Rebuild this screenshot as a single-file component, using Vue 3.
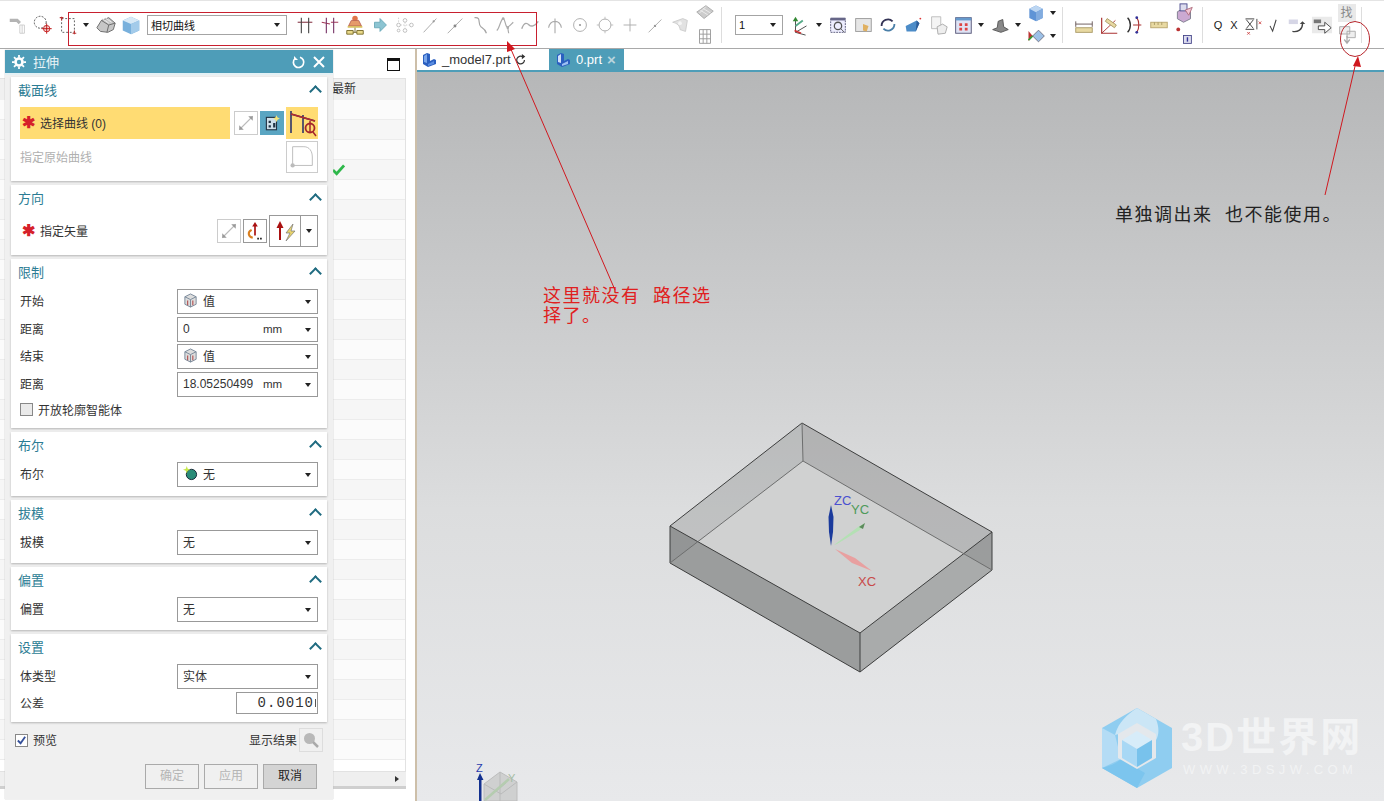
<template>
  <div class="page">
    <!-- top toolbar -->
    <header class="toolbar">
      <span class="tool"><svg viewBox="0 0 24 24"><path d="M3 7h8l3 3" fill="none" stroke="#b4b4b4" stroke-width="3.500"/><path d="M14 12h5v9h-5zM16.500 12v9" fill="none" stroke="#ccc"/></svg></span>
      <span class="tool"><svg viewBox="0 0 24 24"><circle cx="9" cy="9" r="6.500" fill="none" stroke="#444" stroke-dasharray="2 1.500"/><circle cx="16" cy="16" r="3.500" fill="#f3d6d6" stroke="#c22"/><path d="M16 10.500v11M10.500 16h11" stroke="#b11"/></svg></span>
      <span class="tool"><svg viewBox="0 0 24 24"><rect x="5" y="5" width="14" height="15" fill="none" stroke="#555" stroke-dasharray="2 2"/><path d="M3 4h4M5 3v4M17 21h4M19 18v4" stroke="#b33" stroke-width="1.200"/></svg></span>
      <span class="caret-slot"><i class="caret"></i></span>
      <span class="tool tool-a"><svg viewBox="0 0 24 24"><path d="M2 15l5-8 8-3 7 6-2 7-6 3-8-1z" fill="#c6c6c6" stroke="#666"/><path d="M7 7l8 5 7-2M15 12l-2 8" fill="none" stroke="#666"/><path d="M8 5l7 5M11 4l7 5" stroke="#eee"/></svg></span>
      <span class="tool"><svg viewBox="0 0 24 24"><path d="M3 7l9-4 9 4v11l-9 4-9-4z" fill="#78b0dc"/><path d="M3 7l9 4 9-4-9-4z" fill="#d7e9f6"/><path d="M12 11v11l9-4V7z" fill="#a3cbea"/></svg></span>
      <span class="tb-select wide">相切曲线<i class="caret"></i></span>

      <span class="tool tool-b"><svg viewBox="0 0 24 24"><path d="M4 9h16" stroke="#8a3a4a" stroke-width="1.200"/><path d="M8 4v17M16 4v17" stroke="#444" stroke-width="1.200"/></svg></span>
      <span class="tool"><svg viewBox="0 0 24 24"><path d="M3 9l9 2M13 9h8" stroke="#a33a5a" stroke-width="1.200"/><path d="M8 4v17M16 4v17" stroke="#736" stroke-width="1.200"/></svg></span>
      <span class="tool"><svg viewBox="0 0 24 24"><circle cx="12" cy="5" r="3" fill="#e0754a"/><path d="M8 7h8l3 6H5z" fill="#e59a6a" stroke="#b65"/><path d="M4 13h16v2H4z" fill="#d8c060"/><path d="M3 18h7v4H3zM14 18h7v4h-7z" fill="#e9d98a" stroke="#786a2a"/><path d="M10 20h4M12 15v5" stroke="#786a2a"/></svg></span>
      <span class="tool"><svg viewBox="0 0 24 24"><path d="M6 9h6V5l7 7-7 7v-4H6z" fill="#8cc4d2" stroke="#6aa8b8"/></svg></span>
      <span class="tool"><svg viewBox="0 0 24 24"><g fill="none" stroke="#bbb"><circle cx="12" cy="7" r="2"/><circle cx="5" cy="12" r="2"/><circle cx="19" cy="12" r="2"/><circle cx="12" cy="18" r="2"/><circle cx="5" cy="18" r="1.500"/></g><path d="M7 12h10M12 9v7M5 4v6" stroke="#ccc" stroke-dasharray="1.500 1.500"/></svg></span>
      <span class="tool"><svg viewBox="0 0 24 24"><path d="M5 20L19 5" stroke="#a5a5a5"/><circle cx="16" cy="8" r="1.200" fill="#999"/></svg></span>
      <span class="tool"><svg viewBox="0 0 24 24"><path d="M4 21L20 5" stroke="#a5a5a5"/><circle cx="12" cy="13" r="1.600" fill="#888"/></svg></span>
      <span class="tool"><svg viewBox="0 0 24 24"><path d="M6 4c8-1 3 7 7 10 3 2 5 3 6 7" stroke="#a5a5a5" fill="none" stroke-width="1.300"/></svg></span>
      <span class="tool"><svg viewBox="0 0 24 24"><path d="M3 18C6 16 7 6 10 5c2 0 2 7 4 9 2 1 5-3 7-5M15 15l1 6" stroke="#aaa" fill="none" stroke-width="1.300"/><circle cx="10" cy="5" r="1.400" fill="#aaa"/><circle cx="15" cy="15" r="1.400" fill="#aaa"/></svg></span>
      <span class="tool"><svg viewBox="0 0 24 24"><path d="M3 16c3-8 6-6 8-4s6 2 10-4" stroke="#aaa" fill="none" stroke-width="1.600"/></svg></span>
      <span class="tool"><svg viewBox="0 0 24 24"><path d="M5 15c1-5 4-7 7-7s6 2 7 7M12 5v16" stroke="#aaa" fill="none" stroke-width="1.200"/></svg></span>
      <span class="tool"><svg viewBox="0 0 24 24"><circle cx="12" cy="12" r="7" stroke="#aaa" fill="none"/><circle cx="12" cy="12" r="1.200" fill="#999"/></svg></span>
      <span class="tool"><svg viewBox="0 0 24 24"><circle cx="12" cy="12" r="6.500" stroke="#aaa" fill="none"/><path d="M12 3v3M12 18v3M3 12h3M18 12h3" stroke="#bbb"/></svg></span>
      <span class="tool"><svg viewBox="0 0 24 24"><path d="M12 5v14M5 12h14" stroke="#aaa"/></svg></span>
      <span class="tool"><svg viewBox="0 0 24 24"><path d="M5 20L19 6" stroke="#aaa"/><circle cx="12" cy="13" r="1.300" fill="#999"/></svg></span>
      <span class="tool"><svg viewBox="0 0 24 24"><path d="M4 9l11-4 5 2-2 12-6-2c0-4-3-7-8-8z" fill="#e2e2e2" stroke="#ccc"/><circle cx="12" cy="10" r="2" fill="#f6f6f6"/></svg></span>
      <span class="tool tool-col">
        <svg viewBox="0 0 24 24"><path d="M3 11l10-7 8 6-10 8z" fill="#ccc" stroke="#aaa"/><path d="M7 9l8 5M10 7l8 5M13 5l-7 7" stroke="#eee"/></svg>
        <svg viewBox="0 0 24 24"><path d="M6 5h12v15H6zM6 10h12M6 15h12M10 5v15M14 5v15" fill="none" stroke="#999"/></svg>
      </span>
      <span class="sep"></span>

      <span class="tb-select narrow">1<i class="caret"></i></span>
      <span class="tool tool-c"><svg viewBox="0 0 24 24"><path d="M6 20V6M6 20l12-7M6 20l11 3" fill="none" stroke="#444"/><path d="M6 3l-3 5h6z" fill="#383"/><path d="M6 13l8-6" stroke="#5a8" stroke-width="2"/><path d="M5 18l7 3" stroke="#c33" stroke-width="2"/></svg></span>
      <span class="caret-slot"><i class="caret"></i></span>
      <span class="tool"><svg viewBox="0 0 24 24"><rect x="4" y="5" width="16" height="15" fill="#eef" stroke="#557" stroke-dasharray="2 1"/><path d="M4 4h16v3H4z" fill="#668"/><circle cx="12" cy="13" r="4" fill="none" stroke="#555" stroke-width="1.400"/><path d="M15 16l4 4" stroke="#555"/></svg></span>
      <span class="tool"><svg viewBox="0 0 24 24"><rect x="4" y="5" width="17" height="14" fill="#e6e6e6" stroke="#999"/><path d="M12 11l6 2-2 6-4-1z" fill="#e0b060"/></svg></span>
      <span class="tool"><svg viewBox="0 0 24 24"><path d="M5 13a7 7 0 0 1 12-5" fill="none" stroke="#335" stroke-width="2"/><path d="M19 11a7 7 0 0 1-12 5" fill="none" stroke="#4a7fa8" stroke-width="2"/></svg></span>
      <span class="tool"><svg viewBox="0 0 24 24"><path d="M4 13l12-6 3 3-4 9H5z" fill="#4c8cc8"/><path d="M16 7l3 3-4 9z" fill="#2c5c98"/><circle cx="20" cy="5" r="1" fill="#d33"/></svg></span>
      <span class="tool"><svg viewBox="0 0 24 24"><path d="M5 3h10v13H5z" fill="#f4f4f4" stroke="#bbb"/><path d="M11 14l6-3 5 3-2 7-8 1z" fill="#eee" stroke="#aaa"/></svg></span>
      <span class="tool"><svg viewBox="0 0 24 24"><rect x="4" y="4" width="17" height="17" fill="#dfe3f4" stroke="#557"/><path d="M4 4h17v3H4z" fill="#69c"/><path d="M8 10h3v3H8zM14 10h3v3h-3zM8 15h3v3H8zM14 15h3v3h-3z" fill="#d44"/></svg></span>
      <span class="caret-slot"><i class="caret"></i></span>
      <span class="tool tool-d"><svg viewBox="0 0 24 24"><path d="M4 17l5-2 1-7 5-2 1 8 5 3-8 3z" fill="#888" stroke="#555"/></svg></span>
      <span class="caret-slot"><i class="caret"></i></span>
      <span class="stack">
        <span class="stack-row"><svg viewBox="0 0 24 24"><path d="M4 7l8-4 8 4v11l-8 4-8-4z" fill="#5f94d6"/><path d="M4 7l8 4 8-4-8-4z" fill="#bcd6f2"/><path d="M12 11v11l8-4V7z" fill="#82acdf"/></svg><i class="caret"></i></span>
        <span class="stack-row"><svg viewBox="0 0 24 24"><path d="M3 6l5 6-5 6z" fill="#b33"/><path d="M8 12l7-7 7 7-7 7z" fill="#9cc0e6" stroke="#667"/><path d="M3 17l5-5" stroke="#393" stroke-width="2"/></svg><i class="caret"></i></span>
      </span>
      <span class="sep sep-b"></span>

      <span class="tool"><svg viewBox="0 0 24 24"><path d="M3 8v6M21 8v6M3 11h18" stroke="#655" fill="none"/><rect x="3" y="15" width="18" height="5" fill="#e8d9a2" stroke="#a96"/></svg></span>
      <span class="tool"><svg viewBox="0 0 24 24"><path d="M4 4v17h17" fill="none" stroke="#a33" stroke-width="1.300"/><path d="M4 21L19 7" stroke="#a33"/><path d="M10 5l10 7-2 3-10-7z" fill="#e8d9a2" stroke="#a96"/></svg></span>
      <span class="tool"><svg viewBox="0 0 24 24"><path d="M5 4c4 4 4 12 0 16" fill="none" stroke="#333" stroke-width="1.500"/><path d="M15 4c3 4 3 12 0 16M11 12h9" fill="none" stroke="#a33" stroke-width="1.200"/><circle cx="15" cy="4" r="1.500" fill="#339"/><circle cx="15" cy="20" r="1.500" fill="#339"/></svg></span>
      <span class="tool"><svg viewBox="0 0 24 24"><rect x="3" y="9" width="18" height="6" fill="#e8d9a2" stroke="#b9a56c"/><path d="M7 9v3M11 9v3M15 9v3" stroke="#a96"/></svg></span>
      <span class="tool tool-col info">
        <svg viewBox="0 0 24 24"><path d="M5 10l7-4 8 4v8l-8 4-7-4z" fill="#cba9d2" stroke="#778"/><rect x="8" y="1" width="8" height="8" fill="#dde" stroke="#448"/><path d="M14 8l8-3-4 9z" fill="#f1c6d6" stroke="#a67"/></svg>
        <svg viewBox="0 0 24 24"><circle cx="6" cy="5" r="2.200" fill="#b33"/><rect x="12" y="12" width="9" height="9" fill="#dde" stroke="#448"/><path d="M16.500 14v5" stroke="#339" stroke-width="1.600"/></svg>
      </span>
      <span class="sep sep-c"></span>

      <span class="letter">Q</span>
      <span class="letter">X</span>
      <span class="tool small-tool"><svg viewBox="0 0 24 24"><path d="M4 5h10M4 17h10M5 6l8 10M13 6l-8 10" stroke="#333" fill="none"/><path d="M17 5v12" stroke="#333"/><path d="M19 8l3 3M22 8l-3 3M6 20l3 3M9 20l-3 3" stroke="#c44"/></svg></span>
      <span class="tool small-tool"><svg viewBox="0 0 24 24"><path d="M8 13l3 6 4-13" fill="none" stroke="#444" stroke-width="1.200"/></svg></span>
      <span class="tool"><svg viewBox="0 0 24 24"><path d="M3 6h10v5H3z" fill="#d6d6e6"/><path d="M7 19c6 1 11-2 11-8" fill="none" stroke="#444" stroke-width="1.500"/><path d="M15 11l3-3 3 3z" fill="#444"/></svg></span>
      <span class="tool"><svg viewBox="0 0 24 24"><rect x="1" y="3" width="22" height="18" fill="#eaeaea"/><path d="M3 6h8v4H3z" fill="#777"/><path d="M8 13h7V9l7 6-7 6v-4H8z" fill="#fff" stroke="#444"/></svg></span>
      <span class="tool tool-col last">
        <span class="find">找</span>
        <svg viewBox="0 0 24 24"><path d="M4 4h11v8H4zM12 9h9v7h-9z" fill="#eee" stroke="#aaa"/><path d="M12 14v7M9 18l3 4 3-4" fill="none" stroke="#aaa" stroke-width="1.400"/></svg>
      </span>
      <span class="sep sep-d"></span>
    </header>

    <div class="workspace">
      <!-- resource list behind the dialog -->
      <aside class="side">
        <div class="side-top"><span class="max-btn"></span></div>
        <div class="table">
          <div class="table-head"><span>最新</span></div>
          <div v-for="n in 33" :key="n" class="table-row">
            <svg v-if="n === 4" class="tick" viewBox="0 0 14 12"><path d="M1 6l4 4 8-9" fill="none" stroke="#2eb84a" stroke-width="3"/></svg>
          </div>
        </div>
        <div class="hscroll"><i></i></div>
      </aside>

      <main class="main">
        <nav class="tabs">
          <div class="tab">
            <svg class="part" viewBox="0 0 16 16"><path d="M2 3l4-2 3 1v7l4-2 2 1v4l-8 3-5-3z" fill="#2a5fc0"/><path d="M3 4l3-2v9l-3-1z" fill="#79a6ea"/><path d="M7 12l6-3v3l-6 2z" fill="#5a8de0"/></svg>
            <span>_model7.prt</span>
            <svg class="reload" viewBox="0 0 14 14"><path d="M11 7a4.500 4.500 0 1 1-2-3.700" fill="none" stroke="#333" stroke-width="1.400"/><path d="M8 0v6l4-3z" fill="#333"/></svg>
          </div>
          <div class="tab active">
            <svg class="part" viewBox="0 0 16 16"><path d="M2 3l4-2 3 1v7l4-2 2 1v4l-8 3-5-3z" fill="#2a5fc0"/><path d="M3 4l3-2v9l-3-1z" fill="#cfe0fa"/><path d="M7 12l6-3v3l-6 2z" fill="#9cc0f2"/></svg>
            <span>0.prt</span>
            <b>×</b>
          </div>
        </nav>
        <div class="viewport">
          <svg class="model" viewBox="417 72 967 729">
            <polygon points="803,461 670,563 860,672 992,570" fill="#d0d1d1"/>
            <polygon points="802,423 670,526 670,563 803,461" fill="#8a8b8b" fill-opacity=".35"/>
            <polygon points="802,423 992,532 992,570 803,461" fill="#7d7e7e" fill-opacity=".4"/>
            <polygon points="670,526 860,633 860,672 670,563" fill="#636464" fill-opacity=".48"/>
            <polygon points="860,633 992,532 992,570 860,672" fill="#7b7c7c" fill-opacity=".45"/>
            <g fill="none" stroke="#3d3e3e" stroke-width="1">
              <path d="M802 423L670 526V563L860 672L992 570V532ZM670 526L860 633L992 532M860 633V672"/>
            </g>
            <path d="M802 423L803 461L670 563M803 461L992 570" fill="none" stroke="#6d6e6e"/>
            <path d="M831 505l2.500 12-.5 15-2 14-2-14-.5-15z" fill="#1a3a9c"/>
            <path d="M834 545l24-18 7-4-5 7-23 14z" fill="#b4e0b4"/>
            <path d="M859 527l6-4-2 6z" fill="#5b8b5b"/>
            <path d="M835 549l20 9 17 13-20-8z" fill="#e8a0a0"/>
            <text x="834" y="505" class="t-z">ZC</text>
            <text x="851" y="514" class="t-y">YC</text>
            <text x="858" y="586" class="t-x">XC</text>
            <g fill="#cfd0d0" stroke="#bcbdbd">
              <path d="M484 784l16-12 17 10v19h-33z"/>
            </g>
            <path d="M484 801l22-18M500 772v29M484 784l17 10 16-12" fill="none" stroke="#b9baba"/>
            <path d="M485 800l24-21" stroke="#b5ccb0" stroke-width="2.500"/>
            <path d="M480 773l-3 7h2v21h2.500v-21h2z" fill="#12308f"/>
            <text x="476" y="772" class="t-small-z">Z</text>
            <text x="508" y="782" class="t-small-y">Y</text>
          </svg>
          <div class="watermark">
            <svg viewBox="0 0 72 82" class="wm-logo">
              <polygon points="36,1 71,21 71,61 36,81 1,61 1,21" fill="#8fcdf0"/>
              <path d="M36 1L55 12C62 30 52 38 48 40L36 22 14 28C18 14 26 8 36 1Z" fill="#cbe6f6"/>
              <path d="M1 21L14 28 20 52 1 61Z" fill="#b4dcf5"/>
              <path d="M20 52L44 66 36 81 1 61C4 60 14 58 20 52Z" fill="#7cc5ee"/>
              <path d="M36 16L55 27V51L36 62 17 51V27Z" fill="#e4e8ec"/>
              <path d="M36 24L51 33 36 42 21 33Z" fill="#d7ecf9"/>
              <path d="M21 33L36 42V60L21 51Z" fill="#a8d8f5"/>
              <path d="M51 33L36 42V60L51 51Z" fill="#78c2ec"/>
            </svg>
            <div class="wm-text">
              <div class="wm-big">3D世界网</div>
              <div class="wm-small">WWW.3DSJW.COM</div>
            </div>
          </div>
        </div>
      </main>
    </div>

    <!-- floating extrude dialog -->
    <section class="dialog">
      <div class="dlg-title">
        <svg class="gear" viewBox="0 0 16 16"><circle cx="8" cy="8" r="4" fill="none" stroke="#fff" stroke-width="3"/><path d="M8 0v3M8 13v3M0 8h3M13 8h3M2.300 2.300l2 2M11.700 11.700l2 2M13.700 2.300l-2 2M4.300 11.700l-2 2" stroke="#fff" stroke-width="2"/></svg>
        <span class="dlg-name">拉伸</span>
        <svg class="t-btn" viewBox="0 0 14 14"><path d="M3 3.500a5.200 5.200 0 1 0 5-1.200" fill="none" stroke="#fff" stroke-width="1.700"/><path d="M2 1v4h4z" fill="#fff"/></svg>
        <svg class="t-btn" viewBox="0 0 14 14"><path d="M2 2l10 10M12 2L2 12" stroke="#fff" stroke-width="2"/></svg>
      </div>

      <div class="sec s-curve">
        <div class="sec-head">截面线<i class="chev"></i></div>
        <div class="curve-row">
          <div class="pick"><b class="star">✱</b><span class="up">选择曲线 (0)</span></div>
          <span class="sq off"><svg viewBox="0 0 16 16"><path d="M2 14L14 2" stroke="#bbb"/><path d="M10 2h4v4zM2 10v4h4z" fill="#999"/></svg></span>
          <span class="sq blue"><svg viewBox="0 0 16 16"><rect x="3" y="3" width="9" height="11" fill="#cfe0ea" stroke="#234"/><path d="M5 6h2v2H5zM5 10h2v2H5zM9 8h2v4H9z" fill="#234"/><path d="M12 1l1 2 2 1-2 1-1 2-1-2-2-1 2-1z" fill="#f4e57c"/></svg></span>
          <span class="big-sq yellow"><svg viewBox="0 0 32 32"><path d="M5 4v22M5 7l24 7M17 8v18" fill="none" stroke="#222a6a" stroke-width="1.500"/><path d="M5 7l24 7" stroke="#b62d2d" stroke-width="1.500"/><circle cx="24" cy="21" r="4.500" fill="none" stroke="#a4262c" stroke-width="1.800"/><path d="M24 14v12M27 25l3 4" stroke="#a4262c" stroke-width="1.500"/></svg></span>
        </div>
        <div class="origin-row">
          <span class="muted up">指定原始曲线</span>
          <span class="big-sq plain"><svg viewBox="0 0 32 32"><path d="M6 25V5h12c6 0 9 5 9 11v9z" fill="none" stroke="#bbb"/><circle cx="6" cy="25" r="2.300" fill="#bbb"/></svg></span>
        </div>
      </div>

      <div class="sec s-dir">
        <div class="sec-head">方向<i class="chev"></i></div>
        <div class="vec-row">
          <span class="label"><b class="star">✱</b><span class="up">指定矢量</span></span>
          <span class="sq off"><svg viewBox="0 0 16 16"><path d="M2 14L14 2" stroke="#bbb"/><path d="M10 2h4v4zM2 10v4h4z" fill="#999"/></svg></span>
          <span class="sq gap"><svg viewBox="0 0 16 16"><path d="M8 2v10" stroke="#a11" stroke-width="1.500"/><path d="M8 0L5.500 4h5z" fill="#a11"/><path d="M5 7c-4 2-3 6 1 7" fill="none" stroke="#d97f1f" stroke-width="1.800"/><path d="M10 14h1.500v1.500H10zM12.500 14H14v1.500h-1.500z" fill="#222"/></svg></span>
          <span class="split">
            <span class="split-main"><svg viewBox="0 0 28 24"><path d="M9 8v13" stroke="#a11" stroke-width="2"/><path d="M9 2L5.500 9h7z" fill="#a11"/><path d="M22 5l-7 9h4l-4 8 9-10h-4z" fill="#e9d46c" stroke="#777" stroke-width=".7"/></svg></span>
            <span class="split-arrow"><i class="caret"></i></span>
          </span>
        </div>
      </div>

      <div class="sec s-limit">
        <div class="sec-head">限制<i class="chev"></i></div>
        <div class="rows">
          <div class="row tall"><span class="up">开始</span><span class="combo"><svg class="cube" viewBox="0 0 16 16"><path d="M2 4l6-3 6 3v8l-6 3-6-3z" fill="#ddd" stroke="#789"/><path d="M2 4l6 3 6-3M8 7v8" fill="none" stroke="#789"/><path d="M5 8v5M10.500 8v5" stroke="#a33"/></svg>值<i class="caret"></i></span></div>
          <div class="row tall"><span class="up">距离</span><span class="combo"><em>0</em><small>mm</small><i class="caret"></i></span></div>
          <div class="row tall pull"><span class="up">结束</span><span class="combo"><svg class="cube" viewBox="0 0 16 16"><path d="M2 4l6-3 6 3v8l-6 3-6-3z" fill="#ddd" stroke="#789"/><path d="M2 4l6 3 6-3M8 7v8" fill="none" stroke="#789"/><path d="M5 8v5M10.500 8v5" stroke="#a33"/></svg>值<i class="caret"></i></span></div>
          <div class="row tall"><span class="up">距离</span><span class="combo"><em>18.05250499</em><small>mm</small><i class="caret"></i></span></div>
        </div>
        <label class="check-row"><i class="box"></i>开放轮廓智能体</label>
      </div>

      <div class="sec s-one">
        <div class="sec-head">布尔<i class="chev"></i></div>
        <div class="row tall"><span class="up">布尔</span><span class="combo"><svg class="cube" viewBox="0 0 16 16"><circle cx="9" cy="9" r="5.500" fill="#2a8c78" stroke="#123"/><path d="M4 0l1 3 3 1-3 1-1 3-1-3-3-1 3-1z" fill="#c6e84a"/></svg>无<i class="caret"></i></span></div>
      </div>

      <div class="sec s-one">
        <div class="sec-head">拔模<i class="chev"></i></div>
        <div class="row tall"><span class="up">拔模</span><span class="combo">无<i class="caret"></i></span></div>
      </div>

      <div class="sec s-one">
        <div class="sec-head">偏置<i class="chev"></i></div>
        <div class="row tall"><span class="up">偏置</span><span class="combo">无<i class="caret"></i></span></div>
      </div>

      <div class="sec s-set">
        <div class="sec-head">设置<i class="chev"></i></div>
        <div class="row tall"><span class="up">体类型</span><span class="combo">实体<i class="caret"></i></span></div>
        <div class="row tol-row"><span class="up">公差</span><span class="tol">0.0010<i></i></span></div>
      </div>

      <div class="dlg-foot">
        <label class="preview"><i class="box on"><svg viewBox="0 0 12 12"><path d="M2 6l3 3 5-7" fill="none" stroke="#35509a" stroke-width="2"/></svg></i><span class="up">预览</span></label>
        <span class="result up">显示结果</span>
        <span class="search"><svg viewBox="0 0 18 18"><circle cx="7.500" cy="7.500" r="5.500" fill="#b8b8b8"/><path d="M11 11l5 5" stroke="#aaa" stroke-width="2.500"/></svg></span>
      </div>
      <div class="dlg-btns">
        <span class="btn off">确定</span>
        <span class="btn off">应用</span>
        <span class="btn main-btn">取消</span>
      </div>
    </section>

    <!-- red annotations drawn on top of the screenshot -->
    <svg class="notes" viewBox="0 0 1384 801">
      <rect x="68.500" y="12.500" width="468" height="33" fill="none" stroke="#c8202f"/>
      <path d="M615 290L510 47" stroke="#d0181f"/>
      <path d="M507 41l8 8-8 3z" fill="#d0181f"/>
      <path d="M1325 195L1356 62" stroke="#d0181f"/>
      <path d="M1358 56l3 11-8-1z" fill="#d0181f"/>
      <ellipse cx="1355" cy="39" rx="14.500" ry="17.500" fill="none" stroke="#b8262c"/>
    </svg>
    <p class="note-red">这里就没有  路径选<br>择了。</p>
    <p class="note-black">单独调出来  也不能使用。</p>
  </div>
</template>

<script setup>
</script>

<style>
html, body {
  margin: 0;
  background: #fff;
}
</style>

<style scoped>
.page {
  position: relative;
  width: 1384px;
  height: 801px;
  overflow: hidden;
  background: #fff;
  display: flex;
  flex-direction: column;
  font-family: "Liberation Sans", "Noto Sans CJK SC", sans-serif;
  font-size: 12px;
  color: #333;
}
.up {
  padding-bottom: 2px;
}

/* toolbar */
.toolbar {
  flex: none;
  box-sizing: border-box;
  border-top: 1px solid #e4e4e4;
  border-bottom: 1px solid #a9a9a9;
  height: 49px;
  padding-left: 5px;
  display: flex;
  align-items: center;
}
.tool {
  flex: none;
  width: 25px;
  display: flex;
  justify-content: center;
  align-items: center;
}
.tool svg {
  width: 22px;
  height: 22px;
}
.tool-a { margin-left: 1px; }
.tool-b { margin-left: 5px; }
.tool-c { margin-left: 5px; }
.tool-col {
  flex-direction: column;
  gap: 1px;
}
.info svg { width: 21px; height: 21px; }
.small-tool { width: 21px; }
.last svg { height: 22px; }
.caret-slot {
  flex: none;
  width: 12px;
  display: flex;
  justify-content: center;
}
.caret {
  display: inline-block;
  width: 0;
  height: 0;
  border: 3.500px solid transparent;
  border-top: 4px solid #222;
  border-bottom: 0;
}
.tb-select {
  flex: none;
  box-sizing: border-box;
  height: 20px;
  border: 1px solid #a4a4a4;
  padding: 0 6px 0 3px;
  display: flex;
  align-items: center;
  justify-content: space-between;
  font-size: 11px;
  color: #111;
}
.wide {
  width: 140px;
  margin-left: 4px;
}
.narrow {
  width: 48px;
  margin-left: 13px;
}
.sep {
  flex: none;
  width: 1px;
  height: 36px;
  background: #ddd;
  margin-left: 4px;
}
.sep-b { margin-left: 6px; margin-right: 8px; }
.sep-c { margin-left: 6px; margin-right: 7px; }
.sep-d { margin-left: 2px; }
.stack {
  flex: none;
  margin-left: 2px;
  display: flex;
  flex-direction: column;
  gap: 3px;
}
.stack-row {
  display: flex;
  align-items: center;
  gap: 4px;
}
.stack-row svg {
  width: 20px;
  height: 20px;
}
.letter {
  flex: none;
  width: 16px;
  text-align: center;
  font-size: 11px;
  color: #222;
}
.find {
  width: 18px;
  height: 18px;
  background: #e9e9e9;
  color: #888;
  font-size: 12px;
  line-height: 18px;
  text-align: center;
}

/* workspace */
.workspace {
  flex: 1;
  min-height: 0;
  display: flex;
}
.side {
  flex: none;
  box-sizing: border-box;
  padding-right: 9px;
  display: flex;
  flex-direction: column;
  border-right: 2px solid #cdbfa9;
  width: 417px;
}
.side-top {
  flex: none;
  height: 29px;
  display: flex;
  justify-content: flex-end;
  align-items: center;
  padding-right: 6px;
  padding-top: 2px;
  box-sizing: border-box;
}
.max-btn {
  width: 11px;
  height: 9px;
  border: 1px solid #111;
  border-top-width: 3px;
}
.table {
  flex: 1;
  min-height: 0;
  overflow: hidden;
  border: 1px solid #e2e2e2;
  border-left: 0;
}
.table-head {
  height: 21px;
  background: #f0f0f0;
  padding-left: 332px;
  line-height: 21px;
  font-size: 12px;
  color: #333;
}
.table-row {
  height: 19px;
  border-bottom: 1px solid #ececec;
  position: relative;
}
.table-row:nth-child(even) { background: #fbfbfb; }
.table-row:nth-child(odd) { background: #f6f6f6; }
.tick {
  position: absolute;
  left: 332px;
  top: 4px;
  width: 13px;
  height: 12px;
}
.hscroll {
  flex: none;
  height: 14px;
  margin-bottom: 12px;
  background: #efefef;
  border-bottom: 3px solid #cfcfcf;
  position: relative;
}
.hscroll i {
  position: absolute;
  right: 7px;
  top: 4px;
  border: 3px solid transparent;
  border-left: 4px solid #333;
  border-right: 0;
}
.main {
  flex: 1;
  min-width: 0;
  display: flex;
  flex-direction: column;
}
.tabs {
  flex: none;
  height: 21px;
  border-bottom: 2px solid #4e9db8;
  display: flex;
}
.tab {
  flex: none;
  box-sizing: border-box;
  width: 132px;
  padding-left: 4px;
  display: flex;
  align-items: center;
  font-size: 13px;
  color: #333;
}
.tab .part {
  width: 16px;
  height: 16px;
  margin-right: 5px;
}
.reload {
  width: 12px;
  height: 12px;
  margin-left: 4px;
}
.tab.active {
  width: 75px;
  background: #4e9db8;
  color: #fff;
  padding-left: 6px;
}
.tab.active b {
  margin-left: 5px;
  color: #b9d5de;
  font-size: 15px;
  line-height: 1;
}
.viewport {
  flex: 1;
  min-height: 0;
  position: relative;
  background: linear-gradient(#b6b7b8, #dcddde 60%, #e8e9eb);
}
.model {
  position: absolute;
  left: 0;
  top: 0;
  width: 967px;
  height: 729px;
}
.model text {
  font-family: "Liberation Sans", sans-serif;
  font-size: 13px;
}
.model .t-z { fill: #4a50d0; }
.model .t-y { fill: #4e9a5a; }
.model .t-x { fill: #c84a4a; }
.model .t-small-z { fill: #2a3cae; font-size: 11px; }
.model .t-small-y { fill: #a5bda5; font-size: 11px; }
.watermark {
  position: absolute;
  left: 684px;
  top: 635px;
  display: flex;
  gap: 8px;
}
.wm-logo {
  width: 72px;
  height: 82px;
}
.wm-text {
  padding-top: 8px;
  color: #f2f3f4;
}
.wm-big {
  font-size: 40px;
  font-weight: 700;
  line-height: 44px;
  letter-spacing: 2px;
  white-space: nowrap;
}
.wm-small {
  margin-top: 4px;
  font-size: 13px;
  line-height: 14px;
  letter-spacing: 4.400px;
  padding-left: 2px;
  white-space: nowrap;
}

/* dialog */
.dialog {
  position: absolute;
  left: 5px;
  top: 50px;
  width: 328px;
  height: 749px;
  box-sizing: border-box;
  background: #f0f0f0;
  box-shadow: 0 0 1px #aaa;
  padding-bottom: 8px;
  display: flex;
  flex-direction: column;
}
.dlg-title {
  flex: none;
  height: 23px;
  background: #4e9db8;
  color: #fff;
  display: flex;
  align-items: center;
  padding: 0 7px;
  margin-bottom: 4px;
  box-shadow: 0 2px 0 #e4f1f5;
}
.gear {
  width: 14px;
  height: 14px;
  margin-right: 7px;
}
.dlg-name {
  flex: 1;
  font-size: 13px;
  color: #eaf4f7;
}
.t-btn {
  width: 14px;
  height: 14px;
  margin-left: 6px;
}
.sec {
  flex: none;
  margin: 0 6px 4px;
  background: #fff;
  box-shadow: 0 1px 2px #b5b5b5;
  box-sizing: border-box;
  padding: 0 9px;
}
.sec-head {
  height: 24px;
  display: flex;
  align-items: center;
  justify-content: space-between;
  color: #2b7c94;
  font-size: 13px;
  margin-left: -2px;
  margin-right: -6px;
}
.chev {
  width: 7px;
  height: 7px;
  border-top: 2px solid #1f6b80;
  border-left: 2px solid #1f6b80;
  transform: rotate(45deg);
  margin-top: 4px;
  margin-right: 4px;
}
.s-curve { height: 104px; }
.s-dir { height: 70px; }
.s-limit { height: 169px; }
.s-one { height: 64px; }
.s-one + .s-one { height: 63px; }
.s-set { height: 88px; margin-bottom: 0; }
.curve-row {
  display: flex;
  align-items: center;
  margin-top: 6px;
  height: 32px;
}
.pick {
  width: 210px;
  height: 32px;
  background: #ffdc73;
  display: flex;
  align-items: center;
  color: #333;
  margin-right: 4px;
}
.star {
  color: #d6202a;
  font-size: 16px;
  font-weight: 700;
  width: 16px;
  margin-right: 4px;
  text-align: center;
  flex: none;
  line-height: 1;
}
.sq {
  flex: none;
  width: 24px;
  height: 24px;
  box-sizing: border-box;
  border: 1px solid #ccc;
  margin-right: 2px;
  display: flex;
  align-items: center;
  justify-content: center;
}
.sq svg {
  width: 18px;
  height: 18px;
}
.sq.blue {
  background: #5aa5c2;
  border-color: #5aa5c2;
}
.sq.gap { border-color: #999; }
.big-sq {
  flex: none;
  width: 32px;
  height: 32px;
  box-sizing: border-box;
}
.big-sq svg {
  width: 100%;
  height: 100%;
  display: block;
}
.yellow { background: #ffdc73; }
.plain { border: 1px solid #ccc; }
.origin-row {
  display: flex;
  justify-content: space-between;
  align-items: center;
  margin-top: 2px;
}
.muted { color: #b0b0b0; }
.vec-row {
  display: flex;
  align-items: center;
  margin-top: 6px;
}
.label {
  flex: 1;
  display: flex;
  align-items: center;
}
.split {
  flex: none;
  width: 49px;
  height: 32px;
  box-sizing: border-box;
  border: 1px solid #999;
  display: flex;
}
.split-main {
  flex: 1;
  display: flex;
  align-items: center;
  justify-content: center;
}
.split-main svg {
  width: 28px;
  height: 24px;
}
.split-arrow {
  width: 16px;
  border-left: 1px solid #999;
  display: flex;
  align-items: center;
  justify-content: center;
}
.rows {
  display: flex;
  flex-direction: column;
  gap: 3px;
  padding-top: 6px;
}
.row {
  display: flex;
  align-items: center;
  justify-content: space-between;
}
.pull { margin-top: -1px; }
.tall { height: 25px; }
.combo {
  flex: none;
  width: 141px;
  height: 100%;
  box-sizing: border-box;
  border: 1px solid #999;
  background: #fff;
  display: flex;
  align-items: center;
  padding: 0 6px 2px 5px;
  color: #333;
  position: relative;
}
.combo .caret {
  position: absolute;
  right: 6px;
  top: 10px;
}
.combo em {
  font-style: normal;
  width: 80px;
}
.combo small {
  font-size: 11.500px;
}
.cube {
  width: 15px;
  height: 15px;
  margin-right: 5px;
}
.check-row {
  display: flex;
  align-items: center;
  gap: 5px;
  margin-top: 4px;
}
.box {
  flex: none;
  width: 13px;
  height: 13px;
  box-sizing: border-box;
  border: 1px solid #888;
  background: #eaeaea;
  display: block;
}
.box.on { background: #fff; }
.box svg {
  display: block;
  width: 11px;
  height: 11px;
}
.s-one .row,
.s-set .row { margin-top: 6px; }
.s-set .tol-row { margin-top: 3px; }
.tol-row { height: 22px; }
.tol {
  width: 82px;
  height: 22px;
  box-sizing: border-box;
  border: 1px solid #999;
  font-family: "Liberation Mono", monospace;
  font-size: 14px;
  line-height: 20px;
  letter-spacing: 1px;
  padding-right: 1px;
  white-space: nowrap;
  display: flex;
  align-items: center;
  justify-content: flex-end;
}
.tol i {
  width: 1px;
  height: 8px;
  background: #555;
  margin-left: 1px;
}
.dlg-foot {
  flex: none;
  height: 36px;
  display: flex;
  align-items: center;
  padding: 0 10px;
  color: #333;
}
.preview {
  display: flex;
  align-items: center;
  gap: 5px;
  flex: 1;
}
.result { margin-right: 2px; }
.search {
  width: 24px;
  height: 24px;
  box-sizing: border-box;
  border: 1px solid #ddd;
  display: flex;
  align-items: center;
  justify-content: center;
}
.search svg {
  width: 18px;
  height: 18px;
}
.dlg-btns {
  flex: none;
  display: flex;
  justify-content: flex-end;
  gap: 5px;
  padding-right: 16px;
  margin-top: 6px;
}
.btn {
  width: 54px;
  height: 25px;
  box-sizing: border-box;
  border: 1px solid #aaa;
  text-align: center;
  line-height: 23px;
}
.btn.off { color: #b5b5b5; }
.main-btn {
  background: #d4d4d4;
  color: #222;
}

/* notes */
.notes {
  position: absolute;
  left: 0;
  top: 0;
  width: 1384px;
  height: 801px;
  pointer-events: none;
}
.note-red,
.note-black {
  position: absolute;
  margin: 0;
  font-size: 18px;
  line-height: 20px;
  white-space: pre;
  letter-spacing: 1.500px;
  word-spacing: 6px;
}
.note-red {
  left: 543px;
  top: 286px;
  color: #e02020;
}
.note-black {
  left: 1115px;
  top: 205px;
  color: #222;
}
</style>
